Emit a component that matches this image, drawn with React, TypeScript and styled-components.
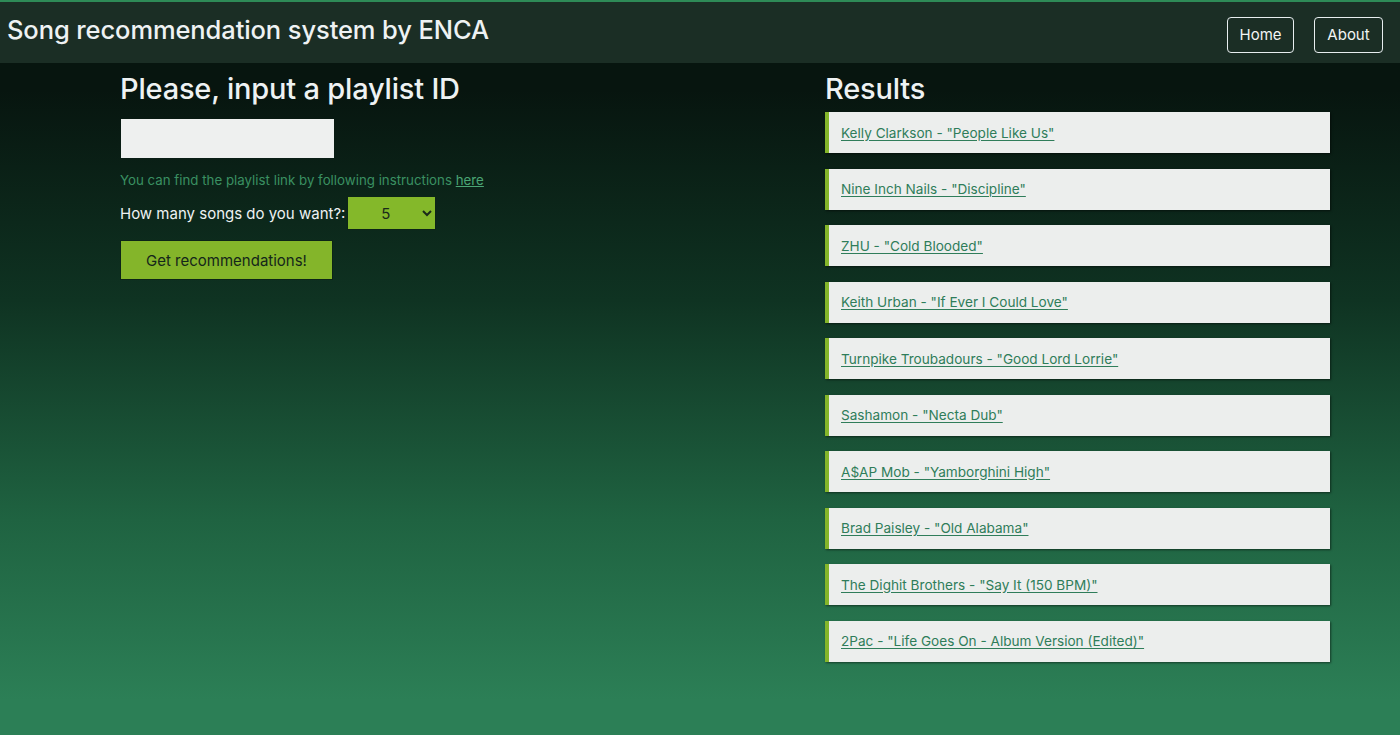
import React from "react";
import styled, { createGlobalStyle } from "styled-components";

const Global = createGlobalStyle`
  html, body { margin: 0; padding: 0; }
  body {
    font-family: Inter, "Noto Sans", "Liberation Sans", sans-serif;
    background: #2c7f56;
    min-height: 100vh;
  }
`;

const Page = styled.div`
  min-height: 735px;
  background: linear-gradient(to bottom, #07150f 0px, #07150f 90px, #0f3322 300px, #1f6341 520px, #2c7f56 700px, #2c7f56 100%);
`;

const Header = styled.header`
  height: 61px;
  border-top: 2px solid #2e8b57;
  background: #1b2e25;
  display: flex;
  align-items: center;
  justify-content: space-between;
  padding: 0 17px 0 7px;
`;

const Brand = styled.h1`
  margin: 0 0 6px 0;
  font-size: 25.5px;
  font-weight: 500;
  color: #eef2f3;
  letter-spacing: -0.1px;
`;

const Nav = styled.nav`
  display: flex;
  gap: 20px;
  margin-top: 4px;
`;

const NavButton = styled.button<{ $w: number }>`
  width: ${(p) => p.$w}px;
  height: 36px;
  background: transparent;
  border: 1px solid #e8eef0;
  border-radius: 4px;
  color: #f2f5f4;
  font-family: inherit;
  font-size: 15px;
  padding: 0;
`;

const Main = styled.main`
  display: grid;
  grid-template-columns: 705px 505px;
  padding: 8px 0 0 120px;
`;

const Column = styled.section`
  display: flex;
  flex-direction: column;
  align-items: flex-start;
`;

const Heading = styled.h2<{ $gap: number }>`
  margin: 0 0 ${(p) => p.$gap}px 0;
  font-size: 29px;
  font-weight: 500;
  color: #eef2f3;
  line-height: 36px;
  letter-spacing: -0.2px;
`;

const TextInput = styled.input`
  width: 213px;
  height: 39px;
  box-sizing: border-box;
  border: none;
  background: #eef0ef;
  margin: 1px 0 0 1px;
`;

const Helper = styled.p`
  margin: 14px 0 0 0;
  font-size: 13.3px;
  color: #3a9062;
  a { color: #4aa574; }
`;

const Row = styled.div`
  display: flex;
  align-items: center;
  gap: 2px;
  margin-top: 8px;
`;

const Label = styled.label`
  font-size: 15px;
  color: #eef2f3;
`;

const Select = styled.select`
  width: 89px;
  height: 34px;
  box-sizing: border-box;
  background: #84b82a;
  border: 1px solid #0c2417;
  color: #1a2a1a;
  font-family: inherit;
  font-size: 15px;
  text-align: center;
  text-align-last: center;
  padding: 0 6px;
`;

const ActionButton = styled.button`
  width: 213px;
  height: 40px;
  box-sizing: border-box;
  margin-top: 10px;
  background: #84b52a;
  border: 1px solid #0c2417;
  color: #14261a;
  font-family: inherit;
  font-size: 15px;
`;

const List = styled.div`
  display: flex;
  flex-direction: column;
  gap: 15.5px;
  align-self: stretch;
`;

const Card = styled.div`
  height: 41px;
  box-sizing: border-box;
  background: #eceeed;
  border-left: 4px solid #84b52a;
  display: flex;
  align-items: center;
  padding-left: 12px;
  box-shadow: 1px 1px 2px rgba(0, 0, 0, 0.5);
`;

const SongLink = styled.a`
  font-size: 13.6px;
  color: #2f7d5a;
  text-decoration: underline;
  text-underline-offset: 2px;
`;

const songs = [
  'Kelly Clarkson - "People Like Us"',
  'Nine Inch Nails - "Discipline"',
  'ZHU - "Cold Blooded"',
  'Keith Urban - "If Ever I Could Love"',
  'Turnpike Troubadours - "Good Lord Lorrie"',
  'Sashamon - "Necta Dub"',
  'A$AP Mob - "Yamborghini High"',
  'Brad Paisley - "Old Alabama"',
  'The Dighit Brothers - "Say It (150 BPM)"',
  '2Pac - "Life Goes On - Album Version (Edited)"',
];

export default function App() {
  return (
    <>
      <Global />
      <Page>
        <Header>
          <Brand>Song recommendation system by ENCA</Brand>
          <Nav>
            <NavButton $w={67}>Home</NavButton>
            <NavButton $w={69}>About</NavButton>
          </Nav>
        </Header>
        <Main>
          <Column>
            <Heading $gap={11}>Please, input a playlist ID</Heading>
            <TextInput type="text" />
            <Helper>
              You can find the playlist link by following instructions <a href="#">here</a>
            </Helper>
            <Row>
              <Label>How many songs do you want?:</Label>
              <Select defaultValue="5">
                {[1, 2, 3, 4, 5, 6, 7, 8, 9, 10].map((n) => (
                  <option key={n} value={String(n)}>{n}</option>
                ))}
              </Select>
            </Row>
            <ActionButton>Get recommendations!</ActionButton>
          </Column>
          <Column>
            <Heading $gap={5}>Results</Heading>
            <List>
              {songs.map((s) => (
                <Card key={s}>
                  <SongLink href="#">{s}</SongLink>
                </Card>
              ))}
            </List>
          </Column>
        </Main>
      </Page>
    </>
  );
}
